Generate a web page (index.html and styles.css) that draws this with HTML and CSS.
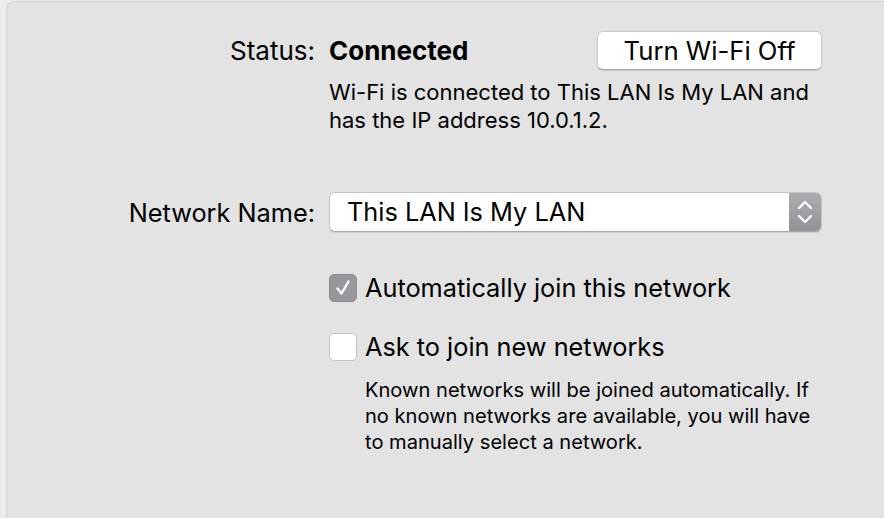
FILE: index.html
```html
<!DOCTYPE html>
<html lang="en">
<head>
<meta charset="utf-8">
<title>Wi-Fi</title>
<link rel="stylesheet" href="styles.css">
</head>
<body>
<div class="panel">
  <div class="row status-row">
    <div class="label">Status:</div>
    <div class="content status-content">
      <span class="status-value">Connected</span>
      <button class="btn">Turn Wi-Fi Off</button>
    </div>
  </div>
  <div class="row">
    <div class="label"></div>
    <div class="content desc">Wi-Fi is connected to This LAN Is My LAN and<br>has the IP address 10.0.1.2.</div>
  </div>
  <div class="row name-row">
    <div class="label small">Network Name:</div>
    <div class="content">
      <div class="popup">
        <span class="popup-text">This LAN Is My LAN</span>
        <span class="stepper">
          <svg width="16" height="24" viewBox="0 0 16 24"><path d="M2 8 L8 2 L14 8" fill="none" stroke="#fff" stroke-width="2.4" stroke-linecap="round" stroke-linejoin="round"/><path d="M2 16 L8 22 L14 16" fill="none" stroke="#fff" stroke-width="2.4" stroke-linecap="round" stroke-linejoin="round"/></svg>
        </span>
      </div>
    </div>
  </div>
  <div class="row check-row first">
    <div class="label"></div>
    <div class="content check">
      <span class="box checked"><svg width="20" height="20" viewBox="0 0 20 20"><path d="M4.5 10.5 L8.5 15.5 L15.5 3.5" fill="none" stroke="#fff" stroke-width="2.4" stroke-linecap="round" stroke-linejoin="round"/></svg></span>
      <span class="check-label">Automatically join this network</span>
    </div>
  </div>
  <div class="row check-row second">
    <div class="label"></div>
    <div class="content check">
      <span class="box"></span>
      <span class="check-label">Ask to join new networks</span>
    </div>
  </div>
  <div class="row">
    <div class="label"></div>
    <div class="content help">Known networks will be joined automatically. If<br>no known networks are available, you will have<br>to manually select a network.</div>
  </div>
</div>
</body>
</html>
```

FILE: styles.css
```css
html, body {
  margin: 0;
  padding: 0;
}
body {
  background: #ececec;
  font-family: Inter, "Noto Sans", "Liberation Sans", sans-serif;
  color: #000;
  overflow: hidden;
  height: 518px;
}
.panel {
  margin: 1px 0 0 6px;
  height: 517px;
  background: #e3e3e3;
  border: 1px solid #d4d4d4;
  border-right: none;
  border-bottom: none;
  border-radius: 8px 0 0 0;
  padding-top: 29px;
  box-sizing: border-box;
}
.row {
  display: flex;
  align-items: center;
}
.label {
  width: 308px;
  flex: none;
  text-align: right;
  font-size: 26px;
  margin-right: 14px;
}
.label.small {
  font-size: 25.3px;
}
.content {
  width: 493px;
  flex: none;
}
.status-content {
  display: flex;
  align-items: center;
  justify-content: space-between;
}
.status-value {
  font-weight: 700;
  font-size: 26px;
}
.btn {
  width: 225px;
  height: 39px;
  background: #fff;
  border: 1px solid #c8c8c8;
  border-bottom-color: #a9a9a9;
  border-radius: 6px;
  box-shadow: 0 1px 1px rgba(0,0,0,0.12);
  font-family: inherit;
  font-size: 25.7px;
  color: #000;
  padding: 0;
}
.desc {
  font-size: 22px;
  line-height: 28px;
  margin-top: 8px;
}
.name-row {
  margin-top: 58px;
}
.popup {
  display: flex;
  height: 40px;
  background: #fff;
  border: 1px solid #c6c6c6;
  border-bottom-color: #a8a8a8;
  border-radius: 6px;
  box-shadow: 0 1px 1px rgba(0,0,0,0.1);
  overflow: hidden;
  box-sizing: border-box;
}
.popup-text {
  flex: 1;
  font-size: 25.3px;
  padding-left: 17px;
  line-height: 38px;
}
.stepper {
  width: 32px;
  background: linear-gradient(#adadb0, #939397);
  display: flex;
  align-items: center;
  justify-content: center;
}
.check {
  display: flex;
  align-items: center;
}
.check-row.first {
  margin-top: 40px;
}
.check-row.second {
  margin-top: 28px;
}
.box {
  width: 28px;
  height: 28px;
  box-sizing: border-box;
  border-radius: 5px;
  background: #fff;
  border: 1px solid #c4c4c4;
  display: flex;
  align-items: center;
  justify-content: center;
  margin-right: 8px;
  flex: none;
}
.box.checked {
  background: #98989c;
  border-color: #8d8d91;
}
.check-label {
  font-size: 25.3px;
}
.help {
  font-size: 20.1px;
  line-height: 26px;
  padding-left: 36px;
  margin-top: 15px;
}
```
